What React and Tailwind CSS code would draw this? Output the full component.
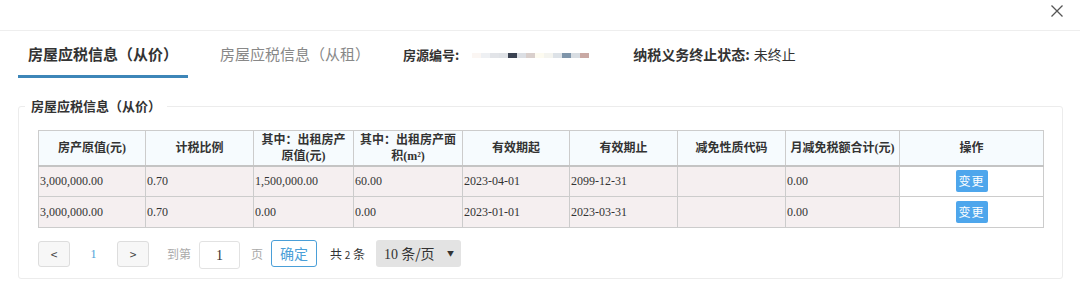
import React from 'react'

const COLS = [107, 108, 100, 109, 107, 108, 108, 114, 144]

const HEADERS = [
  ['房产原值(元)'],
  ['计税比例'],
  ['其中：出租房产', '原值(元)'],
  ['其中：出租房产面', '积(m²)'],
  ['有效期起'],
  ['有效期止'],
  ['减免性质代码'],
  ['月减免税额合计(元)'],
  ['操作'],
]

const ROWS = [
  ['3,000,000.00', '0.70', '1,500,000.00', '60.00', '2023-04-01', '2099-12-31', '', '0.00'],
  ['3,000,000.00', '0.70', '0.00', '0.00', '2023-01-01', '2023-03-31', '', '0.00'],
]

const MASK = ['#fbf6f3', '#eef0f3', '#e2e4e8', '#dfe2e6', '#3b4352', '#dcdfe4', '#d9cfcc', '#fdfbf0', '#f4f4ef', '#dde2e7', '#7f95aa', '#d8dde2', '#c9a9a4']

const App = () => {
  return (
    <div className="w-[1080px] h-[297px] bg-white overflow-hidden text-[#333]" style={{ fontFamily: '"Noto Sans CJK SC", "Noto Sans", sans-serif' }}>
      {/* top bar */}
      <div className="h-[31px] border-b border-[#eeeeee] flex justify-end items-start pr-[16px] pt-[4px]">
        <svg width="14" height="14" viewBox="0 0 14 14" className="text-[#555]">
          <path d="M1.5 1.5 L12.5 12.5 M12.5 1.5 L1.5 12.5" stroke="currentColor" strokeWidth="1.3" fill="none" />
        </svg>
      </div>

      {/* tabs */}
      <div className="h-[47px] flex items-stretch pl-[18px]">
        <div className="w-[170px] flex items-center justify-center border-b-[3px] border-[#3d86b8] pt-[3px]">
          <span className="text-[15px] font-bold text-[#333]">房屋应税信息（从价）</span>
        </div>
        <div className="ml-[32px] flex items-center">
          <span className="text-[15px] text-[#888]">房屋应税信息（从租）</span>
        </div>
        <div className="ml-[33px] flex items-center">
          <span className="text-[13px] font-bold text-[#333]">房源编号:</span>
          <div className="ml-[13px] flex h-[5px] mt-[1px]">
            {MASK.map((c, i) => (
              <div key={i} className="w-[9px] h-full" style={{ background: c }} />
            ))}
          </div>
        </div>
        <div className="ml-[44px] flex items-center text-[14px]">
          <span className="font-bold">纳税义务终止状态:</span>
          <span className="ml-[4px]">未终止</span>
        </div>
      </div>

      {/* fieldset */}
      <fieldset className="mx-[18px] mt-[19px] w-[1044px] h-[182px] border border-[#ececec] rounded-[3px] pl-[19px] pr-[18px] pb-0 pt-[15px]">
        <legend className="ml-[-13px] px-[6px] text-[13px] font-bold text-[#333] leading-[18px]">房屋应税信息（从价）</legend>

        <table className="table-fixed border-collapse w-[1005px] text-[12px]">
          <colgroup>
            {COLS.map((w, i) => (
              <col key={i} style={{ width: w }} />
            ))}
          </colgroup>
          <thead>
            <tr className="h-[35px] bg-[#f6fbfe]">
              {HEADERS.map((h, i) => (
                <th
                  key={i}
                  className="border border-[#cccccc] border-b-2 border-b-[#c4c4c4] font-bold text-center text-[12px] leading-[16px] text-[#333] p-0"
                  style={{ fontFamily: '"Liberation Serif", "Noto Sans CJK SC", serif' }}
                >
                  {h.map((line, j) => (
                    <div key={j}>{line}</div>
                  ))}
                </th>
              ))}
            </tr>
          </thead>
          <tbody>
            {ROWS.map((r, i) => (
              <tr key={i} className="h-[31px]">
                {r.map((c, j) => (
                  <td
                    key={j}
                    className="border border-[#cccccc] bg-[#f5eff0] text-left p-0 pl-[1px] text-[12px] text-[#333]"
                    style={{ fontFamily: '"Liberation Serif", serif' }}
                  >
                    {c}
                  </td>
                ))}
                <td className="border border-[#cccccc] bg-white text-center p-0">
                  <button className="inline-flex items-center justify-center w-[32px] h-[22px] bg-[#4ea6ec] text-white text-[12px] rounded-[2px] tracking-[1px]">
                    变更
                  </button>
                </td>
              </tr>
            ))}
          </tbody>
        </table>

        {/* pagination */}
        <div className="mt-[10px] flex items-center text-[12px]">
          <button className="w-[32px] h-[26px] border border-[#dddddd] bg-[#f7f7f7] rounded-[3px] text-[#444] text-[12px] flex items-center justify-center">&lt;</button>
          <span className="w-[47px] text-center text-[#4a9fd8]" style={{ fontFamily: '"Liberation Serif", serif' }}>1</span>
          <button className="w-[32px] h-[26px] border border-[#dddddd] bg-[#f7f7f7] rounded-[3px] text-[#444] text-[12px] flex items-center justify-center">&gt;</button>
          <span className="ml-[18px] text-[#aaa]">到第</span>
          <div className="ml-[8px] w-[41px] h-[28px] mt-[3px] border border-[#e2e2e2] rounded-[3px] flex items-center justify-center text-[14px] text-[#333]" style={{ fontFamily: '"Liberation Serif", serif' }}>1</div>
          <span className="ml-[11px] text-[#aaa]">页</span>
          <button className="ml-[8px] w-[46px] h-[27px] border border-[#4a9fd8] rounded-[3px] text-[#4a9fd8] text-[14px] flex items-center justify-center">确定</button>
          <span className="ml-[13px] text-[#333]">共 <span className="text-[10px]">2</span> 条</span>
          <div className="ml-[11px] w-[85px] h-[27px] bg-[#e3e3e3] rounded-[3px] flex items-center justify-between pl-[8px] pr-[7px] text-[14px] text-[#333]">
            <span><span style={{ fontFamily: '"Liberation Serif", serif' }}>10</span> 条/页</span>
            <span className="text-[7px]">▼</span>
          </div>
        </div>
      </fieldset>
    </div>
  )
}

export default App
